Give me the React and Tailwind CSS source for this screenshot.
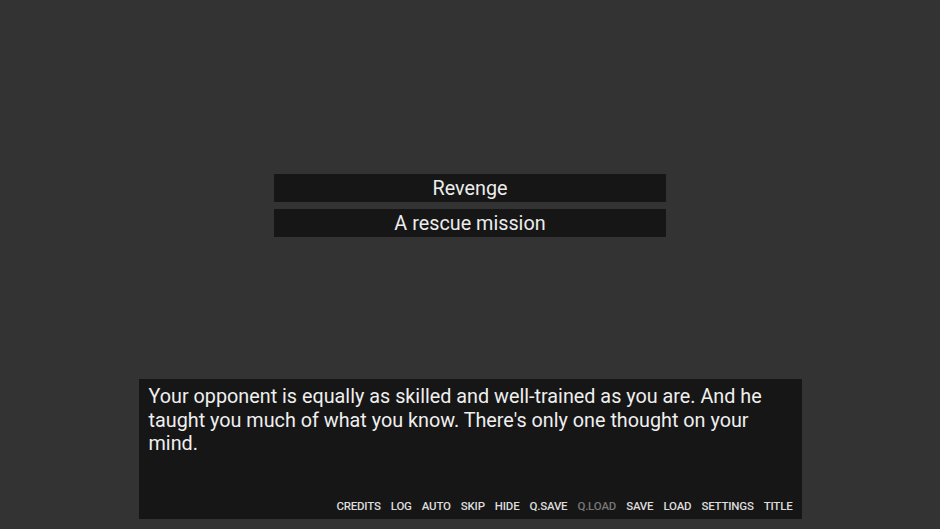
export default function App() {
  const menu = ["CREDITS", "LOG", "AUTO", "SKIP", "HIDE", "Q.SAVE", "Q.LOAD", "SAVE", "LOAD", "SETTINGS", "TITLE"];
  return (
    <div className="w-[940px] h-[529px] bg-[#333333] flex flex-col items-center overflow-hidden" style={{ fontFamily: "Roboto, 'Liberation Sans', sans-serif" }}>
      <div className="mt-[174px] flex flex-col gap-[7px] w-[392px]">
        <div className="h-[28px] pt-[2px] bg-[#161616] text-[#ececec] text-[19.8px] flex items-center justify-center">Revenge</div>
        <div className="h-[28px] pt-[2px] bg-[#161616] text-[#ececec] text-[19.8px] flex items-center justify-center">A rescue mission</div>
      </div>
      <div className="mt-auto mb-[10px] w-[663px] h-[140px] bg-[#161616] flex flex-col pl-[10px] pr-[9px] pt-[6px] pb-[6px]">
        <p className="text-[#efefef] text-[19.8px] leading-[23.5px]">
          Your opponent is equally as skilled and well-trained as you are. And he taught you much of what you know. There's only one thought on your mind.
        </p>
        <div className="mt-auto flex justify-end gap-[10px] text-[11.5px] leading-[14px] font-medium tracking-[-0.2px]">
          {menu.map((m) => (
            <span key={m} className={m === "Q.LOAD" ? "text-[#777777]" : "text-[#dddddd]"}>{m}</span>
          ))}
        </div>
      </div>
    </div>
  );
}
